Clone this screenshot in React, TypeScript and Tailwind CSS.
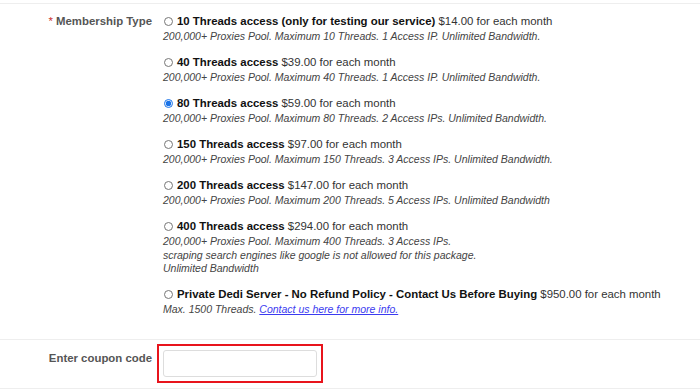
import { useState } from 'react';

type Plan = {
  id: string;
  name: string;
  price: string;
  lines: string[];
  link?: boolean;
};

const plans: Plan[] = [
  { id: 't10', name: '10 Threads access (only for testing our service)', price: '$14.00', lines: ['200,000+ Proxies Pool. Maximum 10 Threads. 1 Access IP. Unlimited Bandwidth.'] },
  { id: 't40', name: '40 Threads access', price: '$39.00', lines: ['200,000+ Proxies Pool. Maximum 40 Threads. 1 Access IP. Unlimited Bandwidth.'] },
  { id: 't80', name: '80 Threads access', price: '$59.00', lines: ['200,000+ Proxies Pool. Maximum 80 Threads. 2 Access IPs. Unlimited Bandwidth.'] },
  { id: 't150', name: '150 Threads access', price: '$97.00', lines: ['200,000+ Proxies Pool. Maximum 150 Threads. 3 Access IPs. Unlimited Bandwidth.'] },
  { id: 't200', name: '200 Threads access', price: '$147.00', lines: ['200,000+ Proxies Pool. Maximum 200 Threads. 5 Access IPs. Unlimited Bandwidth'] },
  {
    id: 't400',
    name: '400 Threads access',
    price: '$294.00',
    lines: [
      '200,000+ Proxies Pool. Maximum 400 Threads. 3 Access IPs.',
      'scraping search engines like google is not allowed for this package.',
      'Unlimited Bandwidth',
    ],
  },
  { id: 'dedi', name: 'Private Dedi Server - No Refund Policy - Contact Us Before Buying', price: '$950.00', lines: ['Max. 1500 Threads.'], link: true },
];

export default function App() {
  const [selected, setSelected] = useState('t80');
  const [coupon, setCoupon] = useState('');

  return (
    <div className="w-[700px] h-[391px] bg-white overflow-hidden font-['Liberation_Sans',Arial,sans-serif] text-[#333]">
      <div className="h-[3px]" />
      <div className="border-t border-[#eee] flex pt-[9px] pb-[22px]">
        <div className="w-[152px] shrink-0 text-right text-[11.4px] leading-[16px] font-bold text-[#555]">
          <span className="text-[#c33] font-normal">*</span> Membership Type
        </div>
        <div className="pl-[11px] flex flex-col gap-[10.5px]">
          {plans.map((p) => (
            <label key={p.id} className="block cursor-pointer">
              <div className="flex items-center text-[11.4px] leading-[16px] text-[#333]">
                <input
                  type="radio"
                  name="membership"
                  checked={selected === p.id}
                  onChange={() => setSelected(p.id)}
                  className="w-[9px] h-[9px] m-0 ml-[1px] mr-[4px] accent-[#1a73e8]"
                />
                <span>
                  <b className="text-[#111]">{p.name}</b> {p.price} for each month
                </span>
              </div>
              <div className="pt-[1px] italic text-[10.5px] leading-[13.5px] text-[#444]">
                {p.lines.map((l, i) => (
                  <div key={i}>
                    {l}
                    {p.link && (
                      <>
                        {' '}
                        <a href="#" className="text-[#3b3bf0] underline">
                          Contact us here for more info.
                        </a>
                      </>
                    )}
                  </div>
                ))}
              </div>
            </label>
          ))}
        </div>
      </div>
      <div className="border-t border-b border-[#eee] flex items-start h-[50px]">
        <div className="w-[152px] shrink-0 text-right pt-[10px] text-[11.4px] leading-[16px] font-bold text-[#555]">
          Enter coupon code
        </div>
        <div className="pl-[5px] pt-[4px]">
          <div className="border-2 border-[#e8141c] p-[4px]">
            <input
              type="text"
              value={coupon}
              onChange={(e) => setCoupon(e.target.value)}
              className="block w-[154px] h-[27px] border border-[#ddd] rounded-[3px] px-2 text-[12px] outline-none"
            />
          </div>
        </div>
      </div>
    </div>
  );
}
